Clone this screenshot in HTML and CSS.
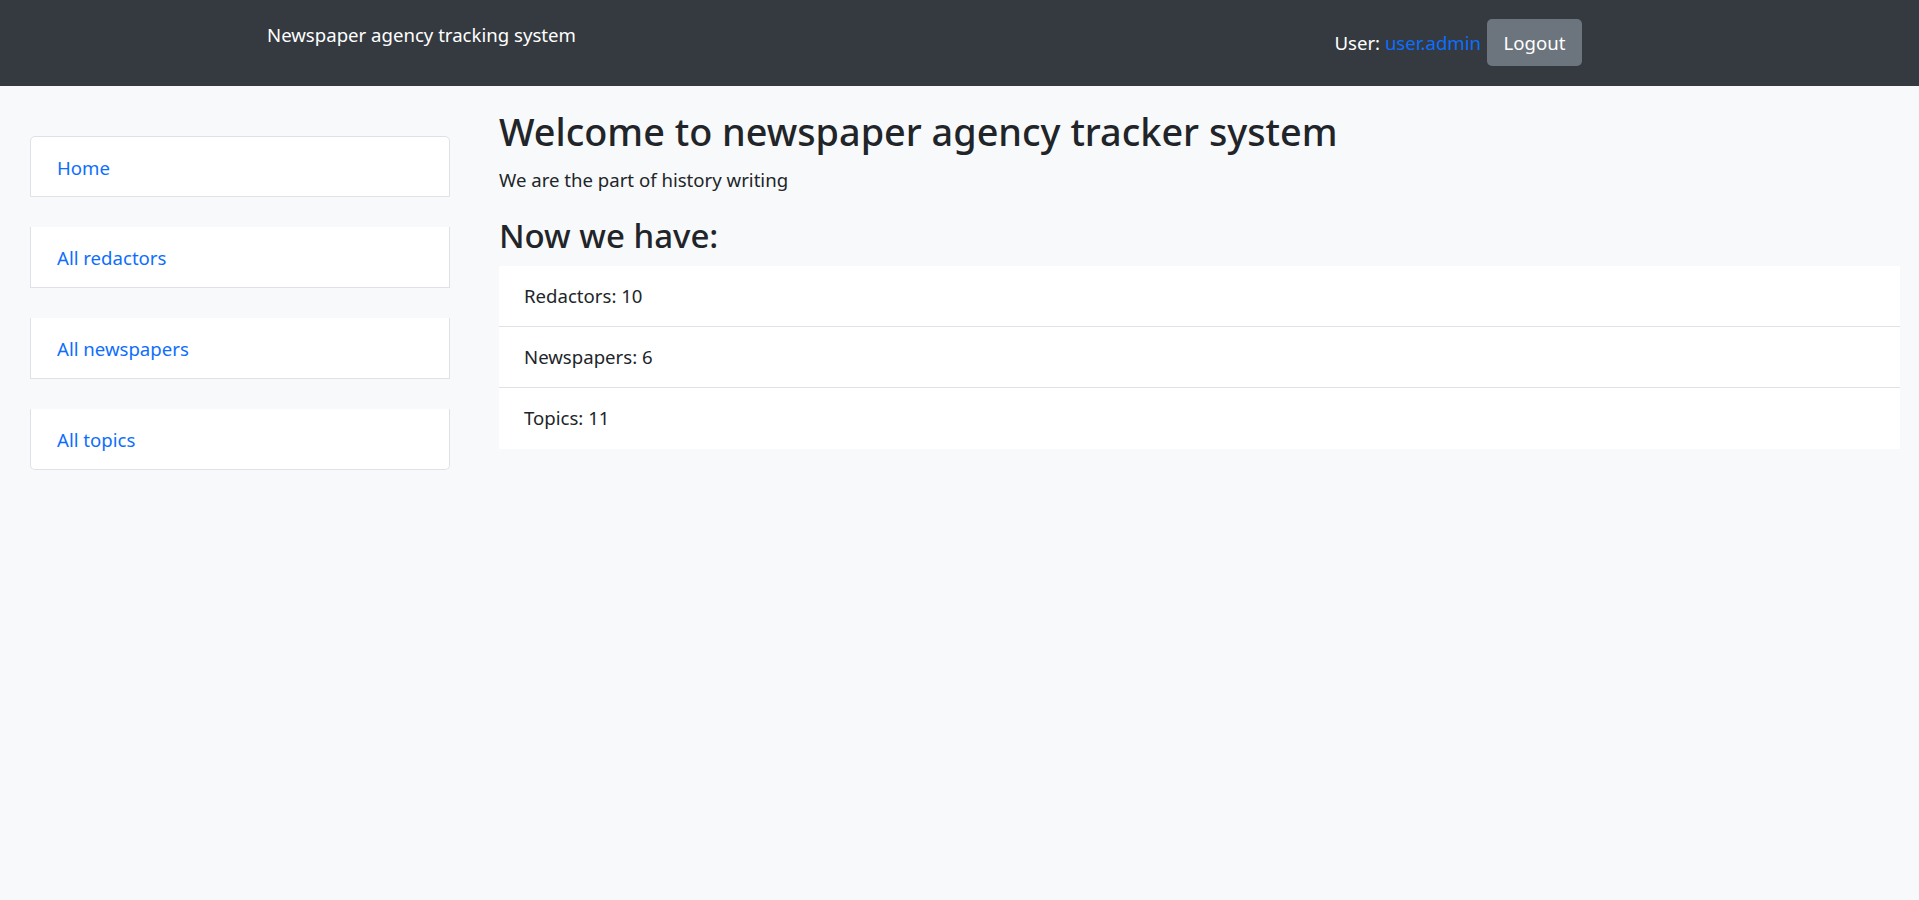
FILE: index.html
```html
<!DOCTYPE html>
<html lang="en">
<head>
<meta charset="utf-8">
<title>Newspaper agency tracking system</title>
<link rel="stylesheet" href="styles.css">
</head>
<body>
<header class="navbar">
  <div class="brand">Newspaper agency tracking system</div>
  <div class="user-area">
    <span class="user-label">User: <a class="user-link" href="#">user.admin</a></span>
    <button class="btn-logout" type="button">Logout</button>
  </div>
</header>
<div class="layout">
  <nav class="sidebar">
    <a class="side-item first" href="#">Home</a>
    <a class="side-item" href="#">All redactors</a>
    <a class="side-item" href="#">All newspapers</a>
    <a class="side-item last" href="#">All topics</a>
  </nav>
  <main class="content">
    <h1 class="title">Welcome to newspaper agency tracker system</h1>
    <p class="lead">We are the part of history writing</p>
    <h2 class="subtitle">Now we have:</h2>
    <ul class="stats">
      <li class="stat">Redactors: 10</li>
      <li class="stat">Newspapers: 6</li>
      <li class="stat">Topics: 11</li>
    </ul>
  </main>
</div>
</body>
</html>
```

FILE: styles.css
```css
* { box-sizing: border-box; }
html, body {
  margin: 0;
  padding: 0;
}
body {
  background: #f8f9fa;
  font-family: "Noto Sans", "Open Sans", sans-serif;
  color: #212529;
  font-size: 18.6px;
}
.navbar {
  height: 86px;
  background: #343a40;
  display: flex;
  justify-content: space-between;
  align-items: flex-start;
  padding: 0 337px 0 267px;
}
.brand {
  color: #fff;
  font-size: 18.6px;
  line-height: 24px;
  margin-top: 23px;
}
.user-area {
  display: flex;
  align-items: center;
  margin-top: 19px;
  gap: 6px;
}
.user-label {
  color: #fff;
  font-size: 18.6px;
}
.user-link {
  color: #0d6efd;
  text-decoration: none;
}
.btn-logout {
  width: 95px;
  height: 47px;
  background: #6c757d;
  color: #fff;
  border: 0;
  border-radius: 5px;
  font-family: inherit;
  font-size: 18.6px;
  padding: 0;
}
.layout {
  display: flex;
  align-items: flex-start;
  padding: 0 19px 0 30px;
}
.sidebar {
  width: 420px;
  flex: none;
  display: flex;
  flex-direction: column;
  gap: 30px;
  padding-top: 50px;
}
.side-item {
  display: block;
  height: 61px;
  line-height: 57px;
  padding: 2px 26px 0;
  background: #fff;
  border: 1px solid #dee2e6;
  border-top-width: 0;
  color: #0d6efd;
  text-decoration: none;
  font-size: 18.6px;
}
.side-item.first {
  border-top-width: 1px;
  border-radius: 5px 5px 0 0;
}
.side-item.last {
  border-radius: 0 0 5px 5px;
}
.content {
  flex: 1;
  margin-left: 49px;
  padding-top: 22px;
}
.title {
  margin: 0;
  font-size: 37.8px;
  font-weight: 500;
  line-height: 48px;
}
.lead {
  margin: 10px 0 0;
  font-size: 18.6px;
  line-height: 28px;
}
.subtitle {
  margin: 22px 0 0;
  font-size: 33px;
  font-weight: 500;
  line-height: 40px;
}
.stats {
  list-style: none;
  margin: 10px 0 0;
  padding: 0;
  background: #fff;
}
.stat {
  height: 61px;
  line-height: 60px;
  padding: 0 25px;
  border-bottom: 1px solid #dee2e6;
  font-size: 18.6px;
}
.stat:last-child {
  border-bottom: 0;
}
```
